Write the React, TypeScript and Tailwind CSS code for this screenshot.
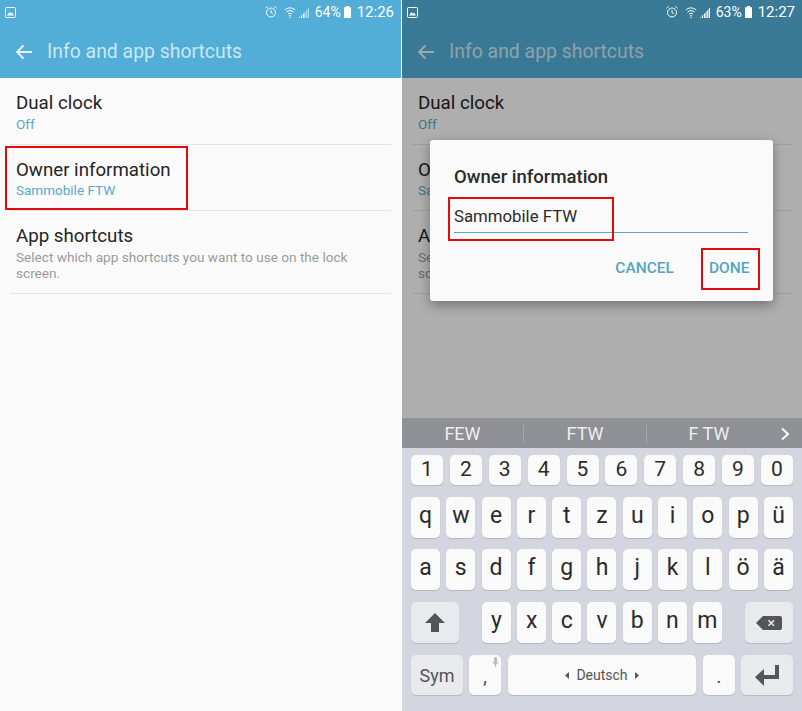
const rows = [
  { title: "Dual clock", sub: "Off", subClass: "text-[13.5px] leading-[18px] text-[#5aa9c7]", height: "h-[67px]" },
  { title: "Owner information", sub: "Sammobile FTW", subClass: "-mt-[1px] text-[13.5px] leading-[18px] text-[#5aa9c7]", height: "h-[66px]" },
  {
    title: "App shortcuts",
    sub: "Select which app shortcuts you want to use on the lock screen.",
    subClass: "mt-[1px] w-[345px] text-[13.6px] leading-[16px] text-[#9a9a9a]",
    height: "h-[83px]",
  },
];

const numberKeys = ["1", "2", "3", "4", "5", "6", "7", "8", "9", "0"];
const letterRows = [
  ["q", "w", "e", "r", "t", "z", "u", "i", "o", "p", "ü"],
  ["a", "s", "d", "f", "g", "h", "j", "k", "l", "ö", "ä"],
];
const bottomLetters = ["y", "x", "c", "v", "b", "n", "m"];

function StatusBar({ battery, time, bg, signal }: { battery: string; time: string; bg: string; signal: number }) {
  return (
    <div className={`flex h-[24px] items-center justify-between pl-[5px] pr-[7px] text-white ${bg}`}>
      <svg width="11" height="11" viewBox="0 0 11 11">
        <rect x="0.5" y="0.5" width="10" height="10" rx="1" fill="none" stroke="#fff" />
        <path d="M2 8.5 L4.5 5 L6 6.8 L7 5.6 L9 8.5 Z" fill="#fff" />
      </svg>
      <div className="flex items-center">
        <svg width="14" height="14" viewBox="0 0 14 14" fill="none" stroke="#fff" strokeWidth="1">
          <circle cx="7" cy="7.5" r="4.5" />
          <path d="M7 5v2.6l1.8 1M1.6 3.2 3.6 1.4M12.4 3.2l-2-1.8" />
        </svg>
        <svg className="ml-[6px]" width="12" height="13" viewBox="0 0 12 13" fill="none" stroke="#fff" strokeWidth="1">
          <path d="M.8 4c2.8-2.8 7.6-2.8 10.4 0M2.4 6c2-1.8 5.2-1.8 7.2 0M4 8c1-.9 3-.9 4 0" />
          <path d="M5 9.8h2M5.4 11.6h1.2" />
        </svg>
        <svg className="ml-[2px]" width="12" height="13" viewBox="0 0 12 13">
          <path d="M11 1.5V12H9.6V3Z M8.8 4V12H7.4V5.5Z" fill="#ffffff" fillOpacity={signal} />
          <path d="M6.5 6.5V12H5V8Z M4.2 8.8V12H2.8V10Z M2 10.8V12H.8Z" fill="#fff" />
        </svg>
        <span className="ml-[5px] text-[14px] leading-none">{battery}</span>
        <svg className="ml-[3px]" width="7" height="12" viewBox="0 0 7 12">
          <path d="M2 0h3v1.2h2V12H0V1.2h2Z" fill="#fff" />
        </svg>
        <span className="ml-[6px] text-[15px] leading-none">{time}</span>
      </div>
    </div>
  );
}

function Toolbar() {
  return (
    <div className="flex h-[54px] items-center bg-[#52aed6] pl-[15px] pt-[1px]">
      <svg width="18" height="16" viewBox="0 0 18 16" fill="none" stroke="#e6f4fa" strokeWidth="1.8">
        <path d="M17 8H2M8.5 1.5 2 8l6.5 6.5" />
      </svg>
      <span className="ml-[14px] text-[19.4px] text-[#cbe7f3]">Info and app shortcuts</span>
    </div>
  );
}

function SettingsList() {
  return (
    <div className="flex-1 bg-[#fafafa] px-[10px]">
      {rows.map((row) => (
        <div key={row.title} className={`flex flex-col border-b border-[#e4e4e4] px-[6px] pt-[13px] ${row.height}`}>
          <span className="text-[18.7px] leading-[24px] text-[#252525]">{row.title}</span>
          <span className={row.subClass}>{row.sub}</span>
        </div>
      ))}
    </div>
  );
}

function Key({ children, className }: { children: React.ReactNode; className: string }) {
  return (
    <div className={`flex items-center justify-center rounded-[5px] shadow-[0_1px_1px_#b4b7bf] ${className}`}>
      {children}
    </div>
  );
}

function Keyboard() {
  return (
    <div className="bg-[#d3d6de] font-['Roboto',sans-serif] text-[#2b2b2b]">
      <div className="flex h-[30px] items-center bg-[#8f8f96] pr-[10px] pt-[1px] text-[18px] text-[#eeeeee]">
        <div className="w-[122px] border-r border-[#a6a6ac] text-center leading-[18px]">FEW</div>
        <div className="w-[123px] border-r border-[#a6a6ac] text-center leading-[18px]">FTW</div>
        <div className="w-[124px] text-center leading-[18px]">F TW</div>
        <svg className="ml-[9px]" width="10" height="14" viewBox="0 0 10 14" fill="none" stroke="#fff" strokeWidth="2">
          <path d="M2 1.5 8 7l-6 5.5" />
        </svg>
      </div>

      <div className="px-[9px] pb-[16px] pt-[7px]">
        <div className="flex justify-between">
          {numberKeys.map((k) => (
            <Key key={k} className="h-[30px] w-[32px] bg-[#fafafa] text-[21px]">
              {k}
            </Key>
          ))}
        </div>

        {letterRows.map((row) => (
          <div key={row[0]} className="mt-[11.5px] flex justify-between first-of-type:mt-[12px]">
            {row.map((k) => (
              <Key key={k} className="h-[41px] w-[29px] bg-[#fafafa] pb-[2px] text-[23px]">
                {k}
              </Key>
            ))}
          </div>
        ))}

        <div className="mt-[12px] flex">
          <Key className="h-[41px] w-[48px] bg-[#e8eaee]">
            <svg width="20" height="19" viewBox="0 0 20 19">
              <path d="M10 0 20 10h-6v9H6v-9H0Z" fill="#555" />
            </svg>
          </Key>
          <div className="ml-[23px] flex w-[240px] justify-between">
            {bottomLetters.map((k) => (
              <Key key={k} className="h-[41px] w-[29px] bg-[#fafafa] pb-[2px] text-[23px]">
                {k}
              </Key>
            ))}
          </div>
          <Key className="ml-[23px] h-[41px] w-[48px] bg-[#e8eaee]">
            <svg width="26" height="14" viewBox="0 0 26 14">
              <path d="M7 0h17a2 2 0 0 1 2 2v10a2 2 0 0 1-2 2H7L0 7Z" fill="#555" />
              <path d="M12.5 4.2 18 9.8M18 4.2l-5.5 5.6" stroke="#e8eaee" strokeWidth="1.6" />
            </svg>
          </Key>
        </div>

        <div className="mt-[12px] flex h-[40px]">
          <Key className="h-[40px] w-[52px] bg-[#e8eaee] text-[18px] text-[#555555]">Sym</Key>
          <Key className="relative ml-[6px] h-[40px] w-[32px] bg-[#fafafa] pt-[1px] text-[20px] text-[#555555]">
            ,
            <svg className="absolute right-[2px] top-[2px]" width="7" height="11" viewBox="0 0 7 11">
              <rect x="2" y="0" width="3" height="7" rx="1.5" fill="#bbbbbb" />
              <path d="M3.5 7v3M1 5c0 3 5 3 5 0" stroke="#bbbbbb" fill="none" />
            </svg>
          </Key>
          <Key className="ml-[7px] h-[40px] w-[188px] gap-[7px] bg-[#fafafa] text-[14px] text-[#555555]">
            <svg width="4" height="7" viewBox="0 0 4 7">
              <path d="M4 0v7L0 3.5Z" fill="#555" />
            </svg>
            <span>Deutsch</span>
            <svg width="4" height="7" viewBox="0 0 4 7">
              <path d="M0 0v7l4-3.5Z" fill="#555" />
            </svg>
          </Key>
          <Key className="ml-[7px] h-[40px] w-[32px] bg-[#fafafa] pt-[2px] text-[20px] text-[#555555]">.</Key>
          <Key className="ml-[6px] h-[40px] w-[52px] bg-[#e8eaee]">
            <svg width="24" height="21" viewBox="0 0 24 21" fill="#555">
              <path d="M20 0h4v14H9v7L0 12l9-8v6h11Z" />
            </svg>
          </Key>
        </div>
      </div>
    </div>
  );
}

function Dialog() {
  return (
    <div className="absolute left-[28px] top-[116px] h-[161px] w-[343px] rounded-[3px] bg-[#fafafa] pl-[24px] pr-[25px] pt-[25px] shadow-[0_4px_12px_rgba(0,0,0,0.35)]">
      <div className="text-[18.5px] font-medium leading-[24px] text-[#2b2b2b]">Owner information</div>
      <div className="mt-[15px] border-b border-[#5aa9c5] pb-[4px] text-[16.8px] leading-[24px] text-[#2b2b2b]">
        Sammobile FTW
      </div>
      <div className="mt-[25px] flex justify-end text-[15.5px] font-medium leading-[20px] text-[#56a4c2]">
        <span>CANCEL</span>
        <span className="-mr-[1.5px] ml-[35px]">DONE</span>
      </div>
    </div>
  );
}

function Highlight({ className }: { className: string }) {
  return <div className={`absolute border-2 border-[#e00c0c] ${className}`} />;
}

export default function App() {
  return (
    <div className="flex h-[711px] w-[802px] overflow-hidden bg-white font-['Roboto',sans-serif]">
      <div className="relative flex h-full w-[401px] flex-col">
        <StatusBar battery="64%" time="12:26" bg="bg-[#52aed6]" signal={0.55} />
        <Toolbar />
        <SettingsList />
        <Highlight className="left-[5px] top-[146px] h-[64px] w-[183px]" />
      </div>

      <div className="relative ml-[1px] flex h-full w-[400px] flex-col">
        <StatusBar battery="63%" time="12:27" bg="bg-[#3a7a96]" signal={1} />
        <Toolbar />
        <SettingsList />
        <Keyboard />
        <div className="absolute inset-x-0 top-[24px] h-[394px] bg-black/30">
          <Dialog />
        </div>
        <Highlight className="left-[46px] top-[197px] h-[44px] w-[166px]" />
        <Highlight className="left-[299px] top-[248px] h-[42px] w-[59px]" />
      </div>
    </div>
  );
}
